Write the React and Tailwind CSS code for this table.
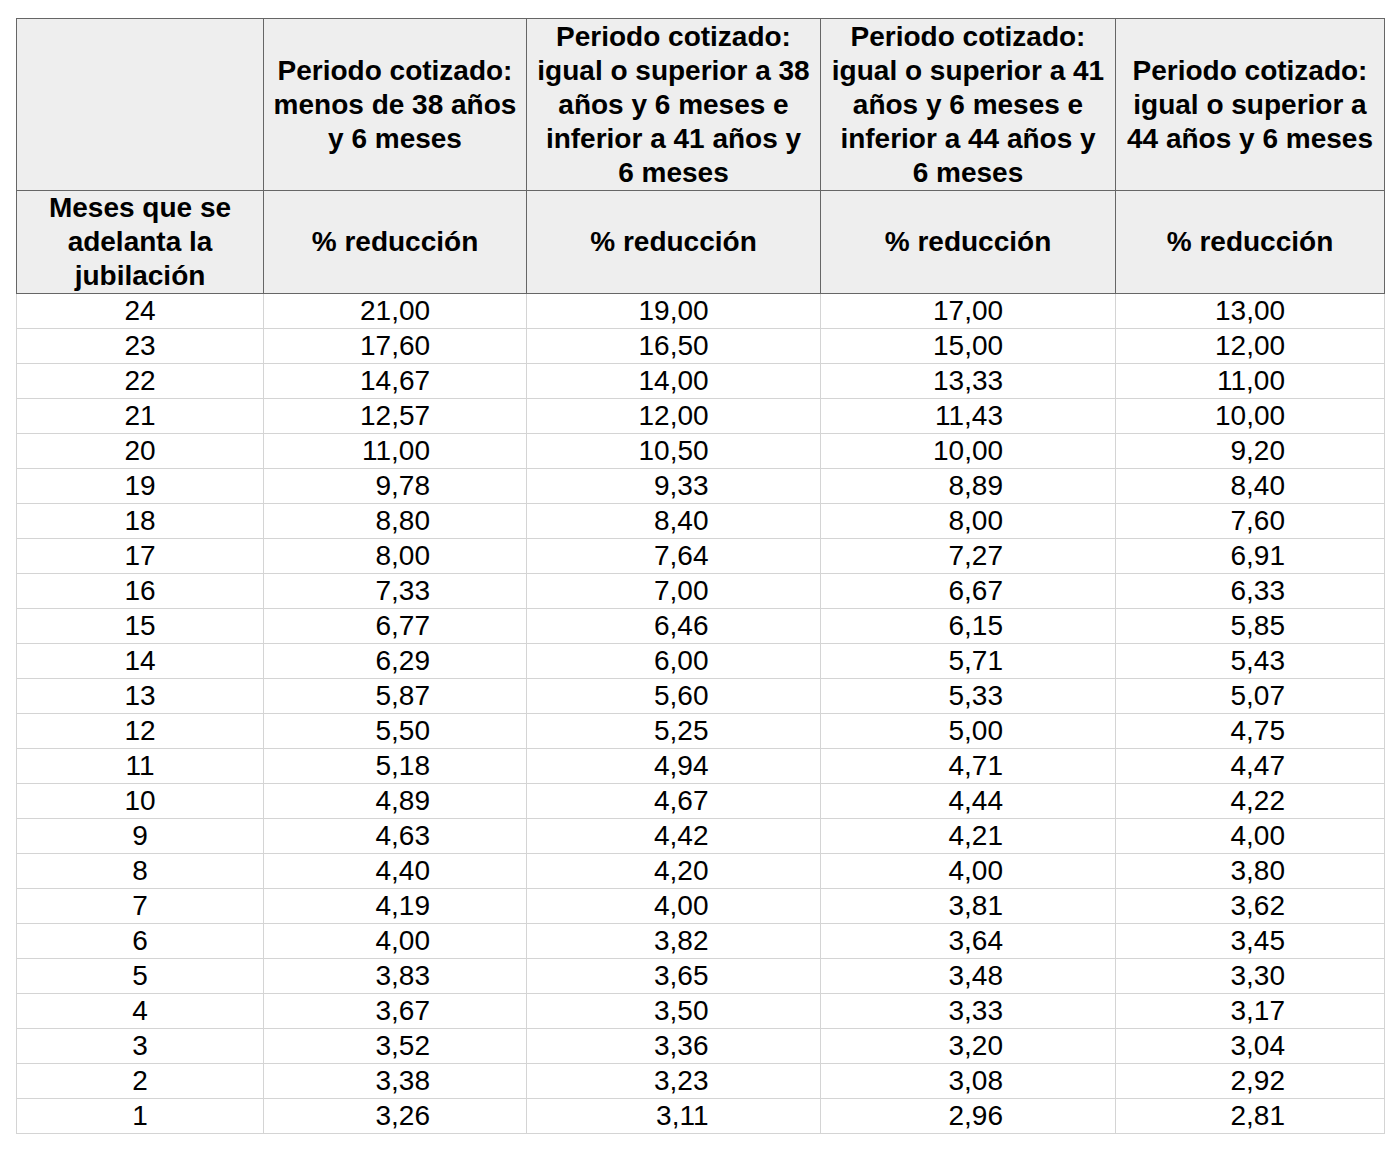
const rows = [
  [24, '21,00', '19,00', '17,00', '13,00'],
  [23, '17,60', '16,50', '15,00', '12,00'],
  [22, '14,67', '14,00', '13,33', '11,00'],
  [21, '12,57', '12,00', '11,43', '10,00'],
  [20, '11,00', '10,50', '10,00', '9,20'],
  [19, '9,78', '9,33', '8,89', '8,40'],
  [18, '8,80', '8,40', '8,00', '7,60'],
  [17, '8,00', '7,64', '7,27', '6,91'],
  [16, '7,33', '7,00', '6,67', '6,33'],
  [15, '6,77', '6,46', '6,15', '5,85'],
  [14, '6,29', '6,00', '5,71', '5,43'],
  [13, '5,87', '5,60', '5,33', '5,07'],
  [12, '5,50', '5,25', '5,00', '4,75'],
  [11, '5,18', '4,94', '4,71', '4,47'],
  [10, '4,89', '4,67', '4,44', '4,22'],
  [9, '4,63', '4,42', '4,21', '4,00'],
  [8, '4,40', '4,20', '4,00', '3,80'],
  [7, '4,19', '4,00', '3,81', '3,62'],
  [6, '4,00', '3,82', '3,64', '3,45'],
  [5, '3,83', '3,65', '3,48', '3,30'],
  [4, '3,67', '3,50', '3,33', '3,17'],
  [3, '3,52', '3,36', '3,20', '3,04'],
  [2, '3,38', '3,23', '3,08', '2,92'],
  [1, '3,26', '3,11', '2,96', '2,81'],
];

const headers = [
  ['Periodo cotizado:', 'menos de 38 años', 'y 6 meses'],
  ['Periodo cotizado:', 'igual o superior a 38', 'años y 6 meses e', 'inferior a 41 años y', '6 meses'],
  ['Periodo cotizado:', 'igual o superior a 41', 'años y 6 meses e', 'inferior a 44 años y', '6 meses'],
  ['Periodo cotizado:', 'igual o superior a', '44 años y 6 meses'],
];

function Lines({ lines }) {
  return lines.map((l, i) => (
    <div key={i} className="whitespace-nowrap">
      {l}
    </div>
  ));
}

export default function App() {
  return (
    <div className="min-h-[1174px] bg-white pt-[18px] pl-[16px] font-['Liberation_Sans',Arial,sans-serif] text-black">
      <table className="table-fixed border-collapse w-[1368px]">
        <colgroup>
          <col className="w-[247px]" />
          <col className="w-[263px]" />
          <col className="w-[294px]" />
          <col className="w-[295px]" />
          <col className="w-[269px]" />
        </colgroup>
        <thead className="bg-[#eeeeee] text-[28px] font-bold leading-[34px]">
          <tr className="h-[172px]">
            <th className="border border-[#666666] p-0"></th>
            {headers.map((h, i) => (
              <th key={i} className="border border-[#666666] p-0 text-center align-middle font-bold">
                <Lines lines={h} />
              </th>
            ))}
          </tr>
          <tr className="h-[103px]">
            <th className="border border-[#666666] p-0 text-center align-middle font-bold">
              <Lines lines={['Meses que se', 'adelanta la', 'jubilación']} />
            </th>
            {headers.map((_, i) => (
              <th key={i} className="border border-[#666666] p-0 text-center align-middle font-bold">
                % reducción
              </th>
            ))}
          </tr>
        </thead>
        <tbody className="text-[28px] leading-[34px]">
          {rows.map((r) => (
            <tr key={r[0]} className="h-[35px]">
              <td className="border border-[#d4d4d4] p-0 text-center">{r[0]}</td>
              {r.slice(1).map((v, i) => (
                <td key={i} className="border border-[#d4d4d4] p-0 text-center">
                  <span className="inline-block w-[70px] text-right">{v}</span>
                </td>
              ))}
            </tr>
          ))}
        </tbody>
      </table>
    </div>
  );
}
